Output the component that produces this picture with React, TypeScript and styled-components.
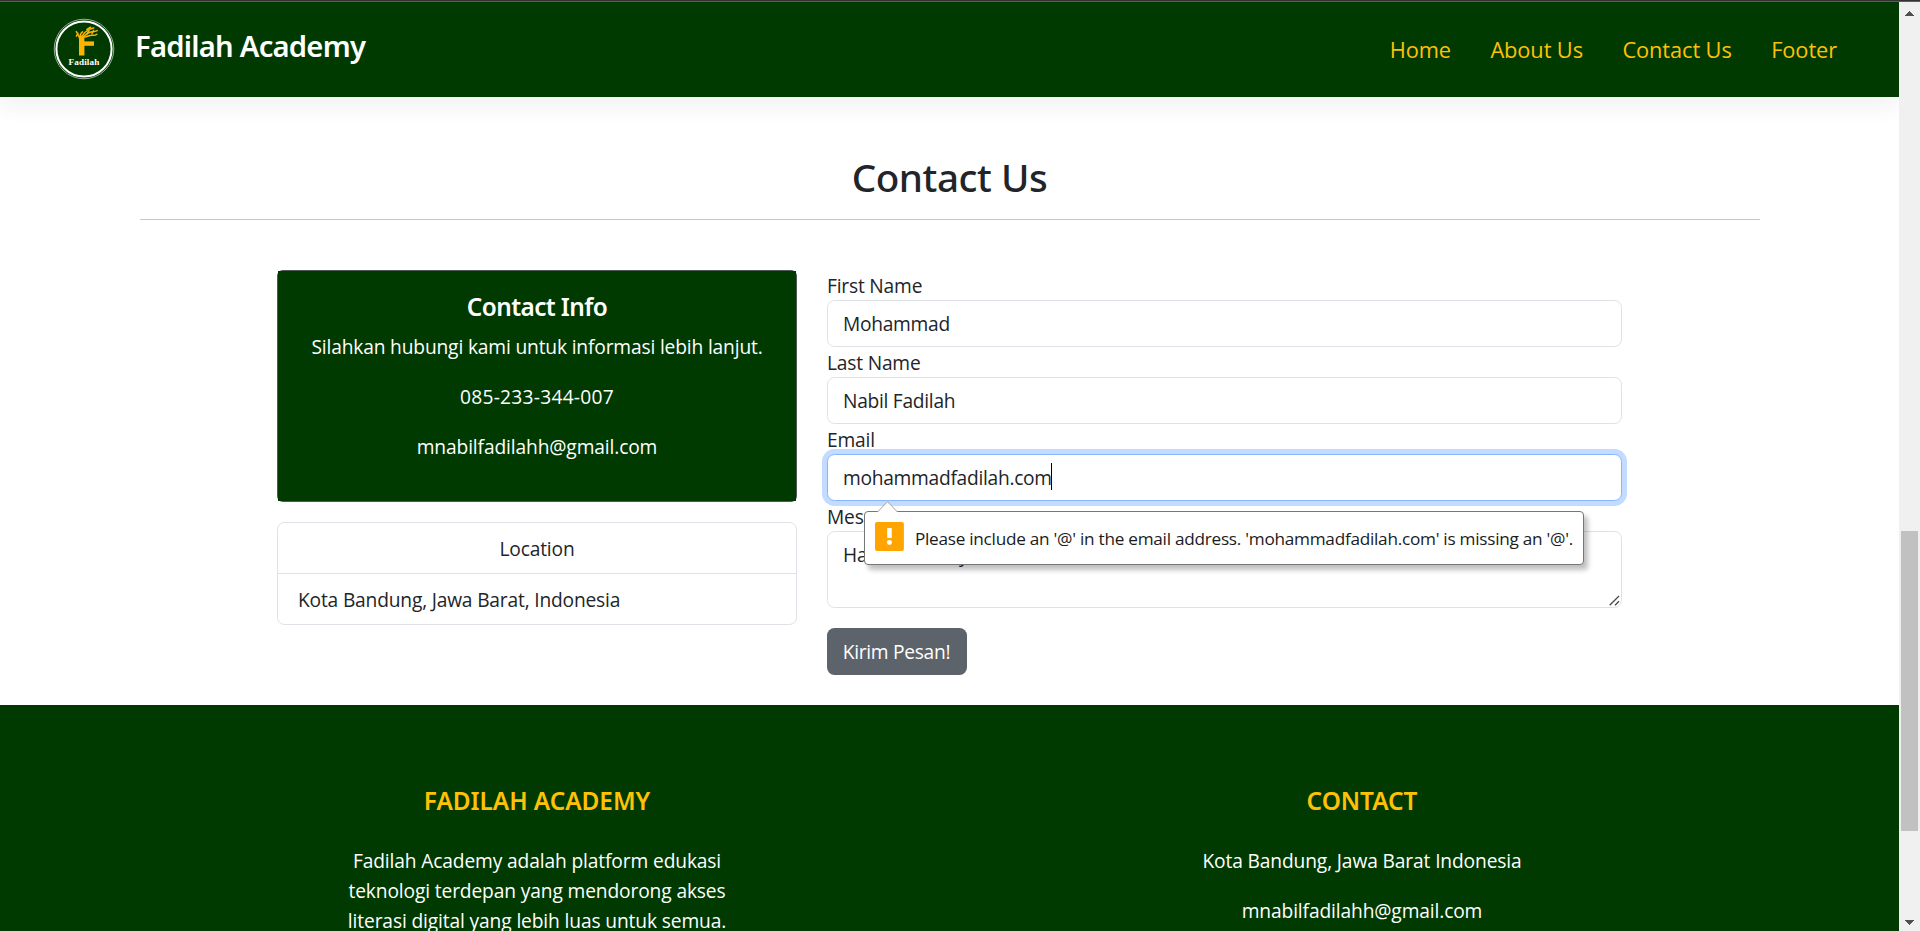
import React from 'react';
import styled, { createGlobalStyle } from 'styled-components';

const green = '#003a00';
const amber = '#ffc107';
const ink = '#212529';
const line = '#dee2e6';
const body = '"Open Sans", "Noto Sans", sans-serif';
const heading = '"Noto Sans", "Open Sans", sans-serif';

const GlobalStyle = createGlobalStyle`
  *, *::before, *::after { box-sizing: border-box; }
  body {
    margin: 0;
    overflow: hidden;
    background: #fff;
    color: ${ink};
    font-family: ${body};
    font-size: 19.2px;
    line-height: 30px;
    letter-spacing: -0.13px;
  }
  p, h1, h2, h3, ul { margin: 0; padding: 0; }
`;

const Window = styled.div`
  display: flex;
  flex-direction: column;
  height: 931px;
  overflow: hidden;
`;

const TopEdge = styled.div`
  flex: none;
  height: 2px;
  background: linear-gradient(#353135 50%, #5c5c5c 50%);
`;

const Viewport = styled.div`
  display: grid;
  grid-template-columns: 1899px 21px;
  height: 929px;
`;

const Page = styled.div`
  height: 929px;
  overflow: hidden;
`;

const Navbar = styled.header`
  display: flex;
  align-items: center;
  justify-content: space-between;
  height: 95px;
  padding: 0 62px 2px 53px;
  background: ${green};
  box-shadow: 0 10px 20px rgba(33, 37, 41, 0.06);
`;

const Brand = styled.div`
  display: flex;
  align-items: center;
  gap: 20px;
  color: #fff;
  font-family: ${heading};
  font-size: 29.2px;
  font-weight: 600;
  letter-spacing: -0.76px;
`;

const BrandName = styled.span`
  padding-bottom: 5px;
`;

const NavLinks = styled.nav`
  display: flex;
  gap: 39.5px;
`;

const NavLink = styled.a`
  color: ${amber};
  font-size: 21.8px;
  letter-spacing: -0.1px;
  padding-top: 2px;
`;

const Section = styled.main`
  width: 1650px;
  height: 608px;
  margin: 0 auto;
  padding: 0 15px;
`;

const Title = styled.h1`
  height: 123px;
  padding-top: 56px;
  border-bottom: 1px solid #c5c6c7;
  color: ${ink};
  font-family: ${heading};
  font-size: 38.6px;
  font-weight: 550;
  line-height: 48px;
  letter-spacing: -0.45px;
  text-align: center;
`;

const Columns = styled.div`
  display: grid;
  grid-template-columns: 520px 795px;
  gap: 30px;
  justify-content: center;
  padding-top: 50px;
`;

const InfoFrame = styled.div`
  height: 232px;
  border: 1px solid #4d5a55;
  border-radius: 6px;
`;

const InfoBody = styled.div`
  height: 230px;
  padding-top: 21px;
  background: ${green};
  color: #fff;
  text-align: center;
`;

const InfoTitle = styled.h2`
  margin-bottom: 10px;
  font-family: ${heading};
  font-size: 24.4px;
  font-weight: 600;
  line-height: 30px;
  letter-spacing: -0.6px;
`;

const Paragraph = styled.p<{ $spacing?: number }>`
  margin-bottom: 20px;
  letter-spacing: ${(p) => p.$spacing ?? -0.13}px;
`;

const LocationCard = styled.div`
  margin-top: 20px;
  border: 1px solid ${line};
  border-radius: 7.5px;
`;

const LocationRow = styled.div<{ $center?: boolean }>`
  padding: 11px 20px 9px;
  text-align: ${(p) => (p.$center ? 'center' : 'left')};
  letter-spacing: -0.18px;

  & + & {
    border-top: 1px solid ${line};
  }
`;

const Form = styled.form`
  display: flex;
  flex-direction: column;
`;

const Label = styled.label`
  height: 30px;
  padding-top: 1px;
  letter-spacing: -0.2px;
`;

const Field = styled.div`
  position: relative;
  display: flex;
`;

const Input = styled.input<{ $active?: boolean }>`
  width: 100%;
  height: 47px;
  padding: 7px 15px;
  border: 1px solid ${(p) => (p.$active ? '#86b7fe' : line)};
  border-radius: 7.5px;
  outline: none;
  background: #fff;
  box-shadow: ${(p) => (p.$active ? '0 0 0 5px #c2dbff' : 'none')};
  color: ${ink};
  font-family: ${body};
  font-size: 19.2px;
  line-height: 30px;
  letter-spacing: -0.28px;
`;

const Caret = styled.span`
  position: absolute;
  left: 224px;
  top: 9px;
  width: 1px;
  height: 27px;
  background: #000;
`;

const TextArea = styled.textarea`
  display: block;
  width: 100%;
  height: 77px;
  padding: 8px 15px 6px;
  border: 1px solid ${line};
  border-radius: 7.5px;
  outline: none;
  overflow: hidden;
  resize: none;
  color: ${ink};
  font-family: ${body};
  font-size: 19.2px;
  line-height: 30px;
  letter-spacing: -0.22px;
`;

const ResizeGrip = styled.svg`
  position: absolute;
  right: 2px;
  bottom: 2px;
`;

const Submit = styled.button`
  align-self: flex-start;
  width: 140px;
  height: 47px;
  margin-top: 20px;
  padding: 0 1px 1px 0;
  border: 0;
  border-radius: 7.5px;
  background: #5c636a;
  color: #fff;
  font-family: ${body};
  font-size: 19.2px;
  letter-spacing: -0.3px;
`;

const Bubble = styled.div`
  position: absolute;
  left: 37px;
  top: 57px;
  z-index: 2;
  display: flex;
  align-items: flex-start;
  gap: 11px;
  width: 720px;
  height: 54px;
  padding: 10px 10px 0;
  border: 1px solid #767676;
  border-radius: 4px;
  background: #fff;
  box-shadow: 4px 5px 5px rgba(0, 0, 0, 0.25);
  color: #1b1b1b;
  font-size: 17.2px;
  letter-spacing: -0.26px;
  white-space: nowrap;
`;

const BubbleTip = styled.svg`
  position: absolute;
  left: 12px;
  top: -11px;
`;

const BubbleText = styled.span`
  padding-top: 2px;
`;

const Footer = styled.footer`
  height: 229px;
  padding-top: 81px;
  background: ${green};
  color: #fff;
  text-align: center;
`;

const FooterColumns = styled.div`
  display: grid;
  grid-template-columns: 825px 825px;
  justify-content: center;
`;

const FooterTitle = styled.h3`
  margin-bottom: 30px;
  color: ${amber};
  font-family: ${heading};
  font-size: 24.4px;
  font-weight: 560;
  line-height: 30px;
  letter-spacing: -0.05px;
`;

const FooterAbout = styled.p`
  width: 400px;
  margin: 0 auto;
`;

const Scrollbar = styled.div`
  display: flex;
  flex-direction: column;
  align-items: center;
  background: #f0f0f0;
`;

const ScrollThumb = styled.div`
  width: 17px;
  height: 300px;
  margin: 508px 0 auto;
  background: #c1c1c1;
`;

function Logo() {
  return (
    <svg width="62" height="62" viewBox="0 0 62 62">
      <circle cx="31" cy="31" r="29.8" fill="none" stroke="#a9bfa9" strokeWidth="0.9" />
      <circle cx="31" cy="31" r="27.6" fill="none" stroke="#fff" strokeWidth="2" />
      <g fill="#ffb300">
        <rect x="26" y="18.5" width="5.4" height="19" />
        <rect x="31" y="23.4" width="10" height="4.4" />
      </g>
      <g fill="none" stroke="#ffb300" strokeWidth="1.5" strokeLinecap="round">
        <path d="M26.5 20c-.6-2.6-2-4.2-3.2-6.4M25 15.4l-1.600 2.800M28 20c-1.600-2.400-.4-5 1.600-6.200" />
        <path d="M28 18.600c2.400-1 2.600-3.600 5-5 2.400-1.600 4.600-3.600 7.800-3.600" />
        <path d="M30 18.400c3-.6 3.600-3.600 7-4.200 2.600-.6 4.600-.4 7.200-1.600" />
        <path d="M31.500 19c3.200 0 4.500-2 7.500-1.800 2 .2 3.400.2 4.800-1M34 11.500l3.600-2.300M34 16l2-3M39 15.500l1.500-3" />
      </g>
      <text x="31" y="47.4" textAnchor="middle" fill="#fff" fontFamily="'Liberation Serif', serif" fontWeight="700" fontSize="9.2" letterSpacing="0.1">
        Fadilah
      </text>
    </svg>
  );
}

function WarningIcon() {
  return (
    <svg width="29" height="29" viewBox="0 0 29 29">
      <rect width="29" height="29" rx="2" fill="#ffa400" />
      <rect x="12.2" y="6" width="4.6" height="10" fill="#fff" />
      <circle cx="14.5" cy="20.5" r="2.5" fill="#fff" />
    </svg>
  );
}

function ScrollArrow({ down }: { down?: boolean }) {
  return (
    <svg width="21" height="21" viewBox="0 0 21 21" shapeRendering="crispEdges">
      <path d={down ? 'M6 10h9l-4.500 5z' : 'M6 14h9l-4.500-5z'} fill="#505050" />
    </svg>
  );
}

export default function App() {
  return (
    <Window>
      <GlobalStyle />
      <TopEdge />
      <Viewport>
        <Page>
          <Navbar>
            <Brand>
              <Logo />
              <BrandName>Fadilah Academy</BrandName>
            </Brand>
            <NavLinks>
              <NavLink>Home</NavLink>
              <NavLink>About Us</NavLink>
              <NavLink>Contact Us</NavLink>
              <NavLink>Footer</NavLink>
            </NavLinks>
          </Navbar>

          <Section>
            <Title>Contact Us</Title>
            <Columns>
              <div>
                <InfoFrame>
                  <InfoBody>
                    <InfoTitle>Contact Info</InfoTitle>
                    <Paragraph $spacing={-0.16}>Silahkan hubungi kami untuk informasi lebih lanjut.</Paragraph>
                    <Paragraph $spacing={0.25}>085-233-344-007</Paragraph>
                    <Paragraph>mnabilfadilahh@gmail.com</Paragraph>
                  </InfoBody>
                </InfoFrame>
                <LocationCard>
                  <LocationRow $center>Location</LocationRow>
                  <LocationRow>Kota Bandung, Jawa Barat, Indonesia</LocationRow>
                </LocationCard>
              </div>

              <Form>
                <Label>First Name</Label>
                <Field>
                  <Input defaultValue="Mohammad" />
                </Field>
                <Label>Last Name</Label>
                <Field>
                  <Input defaultValue="Nabil Fadilah" />
                </Field>
                <Label>Email</Label>
                <Field>
                  <Input $active defaultValue="mohammadfadilah.com" />
                  <Caret />
                  <Bubble>
                    <BubbleTip width="22" height="12" viewBox="0 0 22 12">
                      <path d="M0 12 L0.5 11 L10.5 0.7 L20.5 11 L21 12z" fill="#fff" />
                      <path d="M0.5 11 L10.5 0.7 L20.5 11" fill="none" stroke="#a0a0a0" />
                    </BubbleTip>
                    <WarningIcon />
                    <BubbleText>
                      Please include an '@' in the email address. 'mohammadfadilah.com' is missing an '@'.
                    </BubbleText>
                  </Bubble>
                </Field>
                <Label>Message</Label>
                <Field>
                  <TextArea defaultValue="Halo Academy" />
                  <ResizeGrip width="11" height="11" viewBox="0 0 11 11">
                    <path d="M0.7 10.3 L10 1M6 10.3 L10 6.300" fill="none" stroke="#4a4a4a" strokeWidth="1.3" />
                  </ResizeGrip>
                </Field>
                <Submit type="button">Kirim Pesan!</Submit>
              </Form>
            </Columns>
          </Section>

          <Footer>
            <FooterColumns>
              <div>
                <FooterTitle>FADILAH ACADEMY</FooterTitle>
                <FooterAbout>
                  Fadilah Academy adalah platform edukasi teknologi terdepan yang mendorong akses
                  literasi digital yang lebih luas untuk semua.
                </FooterAbout>
              </div>
              <div>
                <FooterTitle>CONTACT</FooterTitle>
                <Paragraph>Kota Bandung, Jawa Barat Indonesia</Paragraph>
                <Paragraph>mnabilfadilahh@gmail.com</Paragraph>
              </div>
            </FooterColumns>
          </Footer>
        </Page>

        <Scrollbar>
          <ScrollArrow />
          <ScrollThumb />
          <ScrollArrow down />
        </Scrollbar>
      </Viewport>
    </Window>
  );
}
